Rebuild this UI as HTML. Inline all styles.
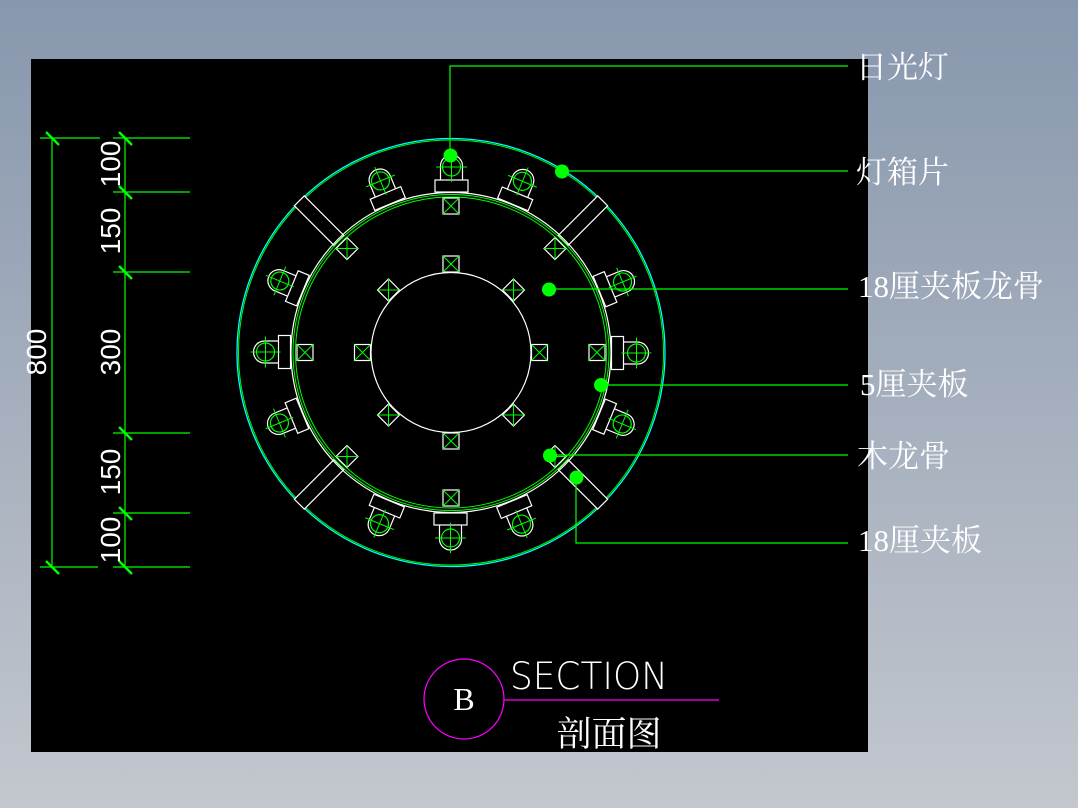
<!DOCTYPE html>
<html><head><meta charset="utf-8"><style>
html,body{margin:0;padding:0;}
body{width:1078px;height:808px;overflow:hidden;background:linear-gradient(#8797ad,#c3c7ce);position:relative;}
svg{position:absolute;left:0;top:0;}
</style></head><body>
<svg width="1078" height="808" viewBox="0 0 1078 808" xmlns="http://www.w3.org/2000/svg">
<defs>
<g id="lamp">
  <rect x="435" y="180" width="33" height="12" fill="none" stroke="#fff" stroke-width="1.2"/>
  <path d="M440.5 180 V166 A11 11 0 0 1 462.5 166 V180" fill="none" stroke="#fff" stroke-width="1.2"/>
  <circle cx="451.5" cy="167" r="9" fill="none" stroke="#0f0" stroke-width="1.2"/>
  <path d="M436 167 H467 M451.5 152 V182" stroke="#0f0" stroke-width="1"/>
</g>
<g id="sq">
  <rect x="-8" y="-8" width="16" height="16" fill="none" stroke="#fff" stroke-width="1.2"/>
  <path d="M-8 -8 L8 8 M8 -8 L-8 8" stroke="#0f0" stroke-width="1"/>
</g>
<g id="dia">
  <path d="M0 -11 L11 0 L0 11 L-11 0 Z" fill="none" stroke="#fff" stroke-width="1.2"/>
  <path d="M0 -11 V11 M-11 0 H11" stroke="#0f0" stroke-width="1"/>
</g>
<g id="rib">
  <rect x="444" y="138" width="14" height="56" fill="#000" stroke="#fff" stroke-width="1.2"/>
</g>
</defs>
<rect x="31" y="59" width="837" height="693" fill="#000"/>

<!-- dimensions -->
<g stroke="#0f0" stroke-width="1.2">
  <line x1="52" y1="138" x2="52" y2="567"/>
  <line x1="125" y1="138" x2="125" y2="567"/>
  <line x1="40" y1="138" x2="100" y2="138"/>
  <line x1="40" y1="567" x2="98" y2="567"/>
  <line x1="113" y1="138" x2="190" y2="138"/>
  <line x1="113" y1="192" x2="190" y2="192"/>
  <line x1="113" y1="272" x2="190" y2="272"/>
  <line x1="113" y1="433" x2="190" y2="433"/>
  <line x1="113" y1="513" x2="190" y2="513"/>
  <line x1="113" y1="567" x2="190" y2="567"/>
</g>
<g stroke="#0f0" stroke-width="2.5">
  <line x1="46" y1="132" x2="59" y2="145"/><line x1="46" y1="561" x2="59" y2="574"/>
  <line x1="119" y1="132" x2="132" y2="145"/><line x1="119" y1="186" x2="132" y2="199"/>
  <line x1="119" y1="266" x2="132" y2="279"/><line x1="119" y1="427" x2="132" y2="440"/>
  <line x1="119" y1="507" x2="132" y2="520"/><line x1="119" y1="561" x2="132" y2="574"/>
</g>
<g fill="#fff" font-family="Liberation Sans, sans-serif" font-size="28" text-anchor="middle">
  <text transform="translate(120,164) rotate(-90)">100</text>
  <text transform="translate(120,231) rotate(-90)">150</text>
  <text transform="translate(120,352) rotate(-90)">300</text>
  <text transform="translate(120,472) rotate(-90)">150</text>
  <text transform="translate(120,540) rotate(-90)">100</text>
  <text transform="translate(46,352) rotate(-90)">800</text>
</g>

<!-- circles -->
<circle cx="451" cy="352.5" r="214" fill="none" stroke="#0ff" stroke-width="1.3"/>
<circle cx="451" cy="352.5" r="212.5" fill="none" stroke="#0f0" stroke-width="1"/>

<use href="#rib" transform="rotate(45 451 352.5)"/>
<use href="#rib" transform="rotate(-45 451 352.5)"/>
<use href="#rib" transform="rotate(135 451 352.5)"/>
<use href="#rib" transform="rotate(-135 451 352.5)"/>

<circle cx="451" cy="352.5" r="160" fill="none" stroke="#fff" stroke-width="1.2"/>
<circle cx="451" cy="352.5" r="158" fill="none" stroke="#0f0" stroke-width="1"/>
<circle cx="451" cy="352.5" r="155.5" fill="none" stroke="#0f0" stroke-width="1"/>
<circle cx="451" cy="352.5" r="80" fill="none" stroke="#fff" stroke-width="1.2"/>

<g>
<use href="#lamp" transform="rotate(0 451 352.5)"/>
<use href="#lamp" transform="rotate(22.5 451 352.5)"/>
<use href="#lamp" transform="rotate(-22.5 451 352.5)"/>
<use href="#lamp" transform="rotate(90 451 352.5)"/>
<use href="#lamp" transform="rotate(67.5 451 352.5)"/>
<use href="#lamp" transform="rotate(112.5 451 352.5)"/>
<use href="#lamp" transform="rotate(180 451 352.5)"/>
<use href="#lamp" transform="rotate(157.5 451 352.5)"/>
<use href="#lamp" transform="rotate(202.5 451 352.5)"/>
<use href="#lamp" transform="rotate(270 451 352.5)"/>
<use href="#lamp" transform="rotate(247.5 451 352.5)"/>
<use href="#lamp" transform="rotate(292.5 451 352.5)"/>
</g>
<use href="#sq" x="451" y="206"/><use href="#sq" x="451" y="498"/>
<use href="#sq" x="305" y="352.5"/><use href="#sq" x="597" y="352.5"/>
<use href="#sq" x="451" y="264"/><use href="#sq" x="451" y="441"/>
<use href="#sq" x="362.5" y="352.5"/><use href="#sq" x="539.5" y="352.5"/>
<use href="#dia" x="347" y="248.5"/><use href="#dia" x="555" y="248.5"/>
<use href="#dia" x="347" y="456.5"/><use href="#dia" x="555" y="456.5"/>
<use href="#dia" x="388.5" y="290"/><use href="#dia" x="513.5" y="290"/>
<use href="#dia" x="388.5" y="415"/><use href="#dia" x="513.5" y="415"/>

<g stroke="#0f0" stroke-width="1.2" fill="none">
  <path d="M450 155 V66 H848"/>
  <path d="M562 171 H848"/>
  <path d="M549 289 H848"/>
  <path d="M601 385 H848"/>
  <path d="M550 455 H848"/>
  <path d="M576 477 V543 H848"/>
</g>
<g fill="#0f0">
  <circle cx="450.5" cy="155.5" r="7"/>
  <circle cx="562" cy="171.5" r="7"/>
  <circle cx="549" cy="289.5" r="7"/>
  <circle cx="601" cy="385" r="7"/>
  <circle cx="550" cy="455.5" r="7"/>
  <circle cx="576.5" cy="477.5" r="7"/>
</g>
<g fill="#fff" font-family="Liberation Serif, Noto Serif CJK SC, serif" font-size="31">
  <text x="856" y="78">日光灯</text>
  <text x="856" y="183">灯箱片</text>
  <text x="858" y="297">18厘夹板龙骨</text>
  <text x="860" y="395">5厘夹板</text>
  <text x="857" y="467">木龙骨</text>
  <text x="858" y="551">18厘夹板</text>
</g>

<circle cx="464" cy="699" r="40" fill="none" stroke="#f0f" stroke-width="1.2"/>
<line x1="504" y1="700" x2="719" y2="700" stroke="#f0f" stroke-width="1.2"/>
<text x="464" y="710" fill="#fff" font-family="Liberation Serif, serif" font-size="32" text-anchor="middle">B</text>
<text x="589" y="689" fill="#fff" font-family="DejaVu Sans, sans-serif" font-weight="200" font-size="37" text-anchor="middle" textLength="158" lengthAdjust="spacingAndGlyphs">SECTION</text>
<text x="609" y="746" fill="#fff" font-family="Noto Serif CJK SC, serif" font-size="35" text-anchor="middle">剖面图</text>
</svg>
</body></html>
